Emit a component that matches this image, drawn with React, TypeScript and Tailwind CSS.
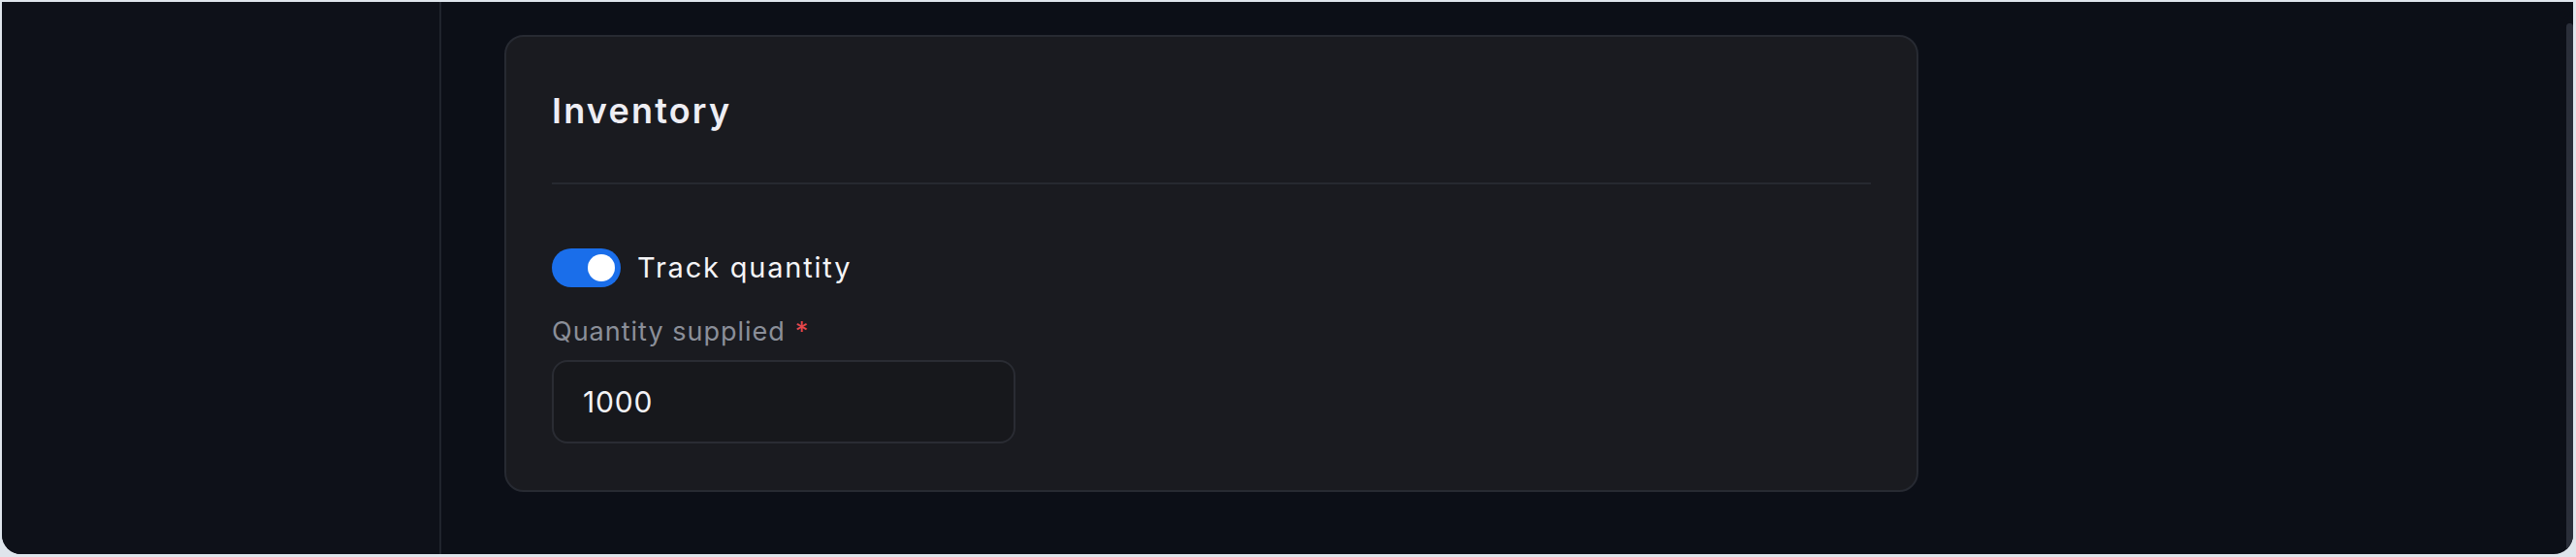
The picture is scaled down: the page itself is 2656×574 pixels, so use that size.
import { useState } from "react";

function Toggle({ on, onChange }: { on: boolean; onChange: (v: boolean) => void }) {
  return (
    <button
      type="button"
      role="switch"
      aria-checked={on}
      onClick={() => onChange(!on)}
      className={`flex h-[40px] w-[71px] shrink-0 items-center rounded-full px-[6px] ${
        on ? "justify-end bg-[#1a6eea]" : "justify-start bg-[#3a3d45]"
      }`}
    >
      <span className="block h-[28px] w-[28px] rounded-full bg-white" />
    </button>
  );
}

function InventoryCard() {
  const [track, setTrack] = useState(true);
  const [qty, setQty] = useState("1000");
  return (
    <section className="flex h-[471px] w-[1458px] flex-col rounded-[20px] border-2 border-[#272a32] bg-[#1a1b20] px-[47px] pt-[54px]">
      <h2 className="text-[36px] font-semibold leading-[44px] tracking-[2.2px] text-[#eeeef4]">Inventory</h2>
      <div className="mt-[52px] h-[2px] w-full bg-[#262930]" />

      <label className="mt-[66px] flex items-center gap-[17px]">
        <Toggle on={track} onChange={setTrack} />
        <span className="text-[29px] leading-[40px] tracking-[1.8px] text-[#f5f5f7]">Track quantity</span>
      </label>

      {track && (
        <>
          <div className="mt-[28px] text-[27px] leading-[36px] tracking-[1px] text-[#8b8f99]">
            Quantity supplied<span className="ml-[10px] text-[#e5484d]">*</span>
          </div>
          <input
            aria-label="Quantity supplied"
            value={qty}
            onChange={(event) => setQty(event.target.value)}
            className="mt-[11px] h-[86px] w-[478px] rounded-[16px] border-2 border-[#2a2c33] bg-[#17181c] pl-[30px] text-[30px] tracking-[0.8px] text-[#f3f3f6] outline-none"
          />
        </>
      )}
    </section>
  );
}

export default function App() {
  return (
    <div className="h-[574px] w-[2656px] bg-[#dfe5ec] pb-[3px] pl-[2px] pr-[3px] pt-[2px] font-[Inter,'Liberation_Sans',sans-serif]">
      <div className="flex h-full overflow-hidden rounded-b-[20px] bg-[#0c0f17]">
        <aside className="w-[453px] shrink-0 border-r-2 border-[#20242d] bg-[#0e1119]" />
        <main className="relative flex-1 pl-[65px] pt-[34px]">
          <InventoryCard />
          {/* scrollbar thumb */}
          <div className="absolute bottom-0 right-0 top-[22px] w-[7px] rounded-t-full bg-[#2a2e39]" />
        </main>
      </div>
    </div>
  );
}
